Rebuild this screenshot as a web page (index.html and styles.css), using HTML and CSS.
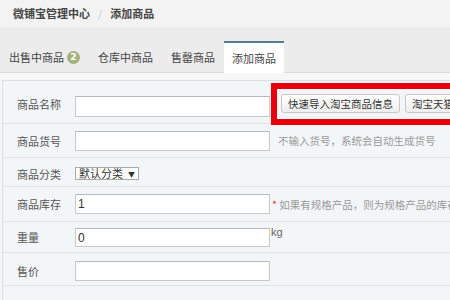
FILE: index.html
```html
<!DOCTYPE html>
<html lang="zh">
<head>
<meta charset="utf-8">
<link rel="stylesheet" href="styles.css">
</head>
<body>
<div class="crumb"><span class="crumb-main">微铺宝管理中心</span><span class="crumb-sep">/</span><span class="crumb-main">添加商品</span></div>
<div class="tabs">
  <div class="tab">出售中商品<span class="badge">2</span></div>
  <div class="tab">仓库中商品</div>
  <div class="tab">售罄商品</div>
  <div class="tab active">添加商品</div>
</div>
<div class="form">
  <div class="row r1">
    <div class="label">商品名称</div>
    <div class="input w-long"></div>
    <div class="btn">快速导入淘宝商品信息</div>
    <div class="btn">淘宝天猫商品导入</div>
  </div>
  <div class="row r2">
    <div class="label">商品货号</div>
    <div class="input w-long"></div>
    <div class="hint">不输入货号，系统会自动生成货号</div>
  </div>
  <div class="row r3">
    <div class="label">商品分类</div>
    <div class="select">默认分类<span class="arrow">▼</span></div>
  </div>
  <div class="row r4">
    <div class="label">商品库存</div>
    <div class="input w-long">1</div>
    <div class="hint"><span class="star">*</span> 如果有规格产品，则为规格产品的库存总和</div>
  </div>
  <div class="row r5">
    <div class="label">重量</div>
    <div class="input w-long short">0</div>
    <div class="unit">kg</div>
  </div>
  <div class="row r6">
    <div class="label">售价</div>
    <div class="input w-long"></div>
  </div>
  <div class="row r7">
    <div class="label">是否推荐</div>
    <div class="check"><span class="box"></span>推荐</div>
  </div>
  <div class="mark"></div>
</div>
</body>
</html>
```
FILE: styles.css
```css
* { box-sizing: border-box; }
html, body { margin: 0; padding: 0; }
body {
  width: 450px;
  height: 300px;
  overflow: hidden;
  background: #f6f6f6;
  font-family: "Noto Sans CJK SC", "Noto Sans", sans-serif;
  font-size: 11px;
  color: #555;
}
.crumb {
  height: 27px;
  line-height: 27px;
  padding-left: 13px;
  background: #f3f3f3;
  white-space: nowrap;
}
.crumb-main { font-weight: bold; color: #444; }
.crumb-sep { color: #d0d0d0; margin: 0 8px 0 8px; }
.tabs {
  height: 46px;
  background: #ececec;
  border-bottom: 1px solid #dcdcdc;
  display: flex;
  align-items: flex-end;
  white-space: nowrap;
}
.tab {
  height: 32px;
  margin-bottom: -1px;
  padding: 0 9px;
  display: flex;
  align-items: center;
  color: #444;
}
.tab.active {
  background: #fff;
  border-top: 2px solid #4f7f90;
  padding: 0 8px;
}
.badge {
  width: 13px;
  height: 13px;
  margin-left: 3px;
  border-radius: 50%;
  background: #a3b27f;
  color: #fff;
  font-family: "DejaVu Sans", sans-serif;
  font-weight: bold;
  font-size: 9px;
  line-height: 13px;
  text-align: center;
}
.form {
  position: relative;
  margin: 7px 0 0 2px;
  padding-top: 3px;
  background: #f3f6f8;
  border-top: 1px solid #d7dfe5;
  border-left: 1px solid #d7dfe5;
  height: 240px;
  overflow: hidden;
}
.row {
  display: flex;
  align-items: center;
  padding-left: 14px;
  border-bottom: 1px solid #dde4e9;
  white-space: nowrap;
}
.r1 { height: 40px; }
.r2 { height: 34px; }
.r3 { height: 29px; padding-top: 3px; }
.r4 { height: 35px; }
.r5 { height: 31px; }
.r6 { height: 33px; padding-top: 3px; }
.r7 { height: 30px; border-bottom: 0; }
.label {
  width: 58px;
  flex: none;
  color: #555;
}
.input {
  height: 20px;
  background: #fff;
  border: 1px solid #c9c9c9;
  border-top-color: #b8b8b8;
  padding-left: 2px;
  line-height: 18px;
  color: #333;
  font-family: "Liberation Sans", sans-serif;
  font-size: 12px;
  flex: none;
}
.w-long { width: 195px; }
.r1 .input { height: 21px; margin-top: 5px; }
.short { height: 19px; }
.btn {
  flex: none;
  margin-left: 11px;
  height: 19px;
  padding: 0 6px;
  line-height: 17px;
  border: 1px solid #c8c8c8;
  border-radius: 3px;
  background: linear-gradient(#ffffff, #eeeeee);
  color: #333;
  font-size: 10.5px;
}
.btn + .btn { margin-left: 5px; }
.hint {
  margin-left: 8px;
  color: #999;
  font-size: 10.5px;
}
.r4 .hint { margin-left: 2px; }
.star { color: #e23b3b; }
.select {
  height: 13px;
  line-height: 11px;
  padding: 0 3px;
  background: #fff;
  border: 1px solid #a9a9a9;
  color: #333;
  font-size: 11px;
}
.arrow { font-size: 7px; margin-left: 5px; vertical-align: 1px; }
.unit {
  align-self: flex-start;
  margin-top: 4px;
  margin-left: 1px;
  color: #666;
  font-family: "Liberation Sans", sans-serif;
  font-size: 11px;
}
.check {
  display: flex;
  align-items: center;
  color: #555;
  margin-top: 16px;
}
.box {
  width: 9px;
  height: 9px;
  margin: 0 2px 0 2px;
  border: 1px solid #888;
  background: #fff;
}
.r7 .label { margin-top: 16px; }
.mark {
  position: absolute;
  left: 268px;
  top: 2px;
  width: 200px;
  height: 42px;
  border: 6px solid #e8000d;
}
```
